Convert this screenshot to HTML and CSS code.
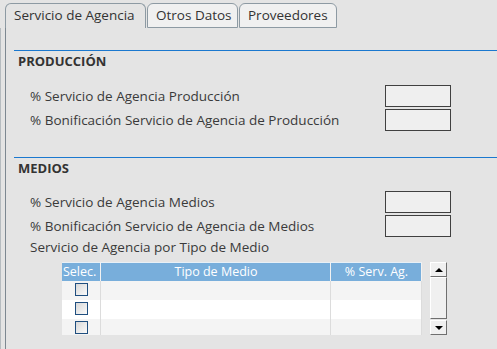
FILE: index.html
```html
<!DOCTYPE html>
<html lang="es">
<head>
    <meta charset="UTF-8">
    <title>Servicio de Agencia</title>
    <link rel="stylesheet" href="styles.css">
</head>
<body>
<div class="tabs">
    <div class="tab active">Servicio de Agencia</div>
    <div class="tab">Otros Datos</div>
    <div class="tab">Proveedores</div>
</div>
<div class="frame">
    <div class="panel">
        <!--produccion-->
        <div class="section">
            <h2>PRODUCCIÓN</h2>
            <div class="rows">
                <div class="row"><span>% Servicio de Agencia Producción</span><input class="field" type="text"></div>
                <div class="row"><span>% Bonificación Servicio de Agencia de Producción</span><input class="field" type="text"></div>
            </div>
        </div>
        <!--medios-->
        <div class="section medios">
            <h2>MEDIOS</h2>
            <div class="rows">
                <div class="row"><span>% Servicio de Agencia Medios</span><input class="field" type="text"></div>
                <div class="row"><span>% Bonificación Servicio de Agencia de Medios</span><input class="field" type="text"></div>
                <div class="row caption"><span>Servicio de Agencia por Tipo de Medio</span></div>
            </div>
            <div class="grid-box">
                <div class="grid">
                    <div class="head">Selec.</div>
                    <div class="head center">Tipo de Medio</div>
                    <div class="head center">% Serv. Ag.</div>

                    <div class="cell odd"><span class="check"></span></div>
                    <div class="cell odd"></div>
                    <div class="cell odd"></div>

                    <div class="cell"><span class="check"></span></div>
                    <div class="cell"></div>
                    <div class="cell"></div>

                    <div class="cell odd"><span class="check"></span></div>
                    <div class="cell odd"></div>
                    <div class="cell odd"></div>
                </div>
                <div class="scroll">
                    <div class="btn up"></div>
                    <div class="thumb"></div>
                    <div class="btn down"></div>
                </div>
            </div>
        </div>
    </div>
</div>
</body>
</html>
```

FILE: styles.css
```css
* {
    box-sizing: border-box;
}

body {
    margin: 0;
    background: #e4e4e4;
    font-family: "Open Sans", "Noto Sans", sans-serif;
    font-size: 13.5px;
    color: #3a3a3a;
    height: 349px;
    overflow: hidden;
}

/* pestañas */
.tabs {
    display: flex;
    margin-left: 5px;
    padding-top: 3px;
    height: 28px;
}

.tab {
    height: 25px;
    line-height: 23px;
    padding: 0 8px;
    border: 1px solid #8d9aa3;
    border-radius: 6px 6px 0 0;
    background: #f0f0f0;
    color: #333;
    margin-right: 1px;
    white-space: nowrap;
}

.tab.active {
    background: #e4e4e4;
    border-bottom: 0;
    width: 141px;
}

.tab:nth-child(2) {
    width: 91px;
}

.tab:nth-child(3) {
    width: 98px;
}

.frame {
    border-left: 1px solid #b6bcc0;
    padding-left: 4px;
    height: 321px;
}

.panel {
    border-left: 1px solid #7d8891;
    height: 100%;
    padding-top: 22px;
}

.section {
    margin-left: 8px;
    border-top: 1px solid #1b78cf;
}

.section.medios {
    margin-top: 26px;
}

.section h2 {
    margin: 0;
    padding-left: 4px;
    font-size: 13px;
    line-height: 20px;
    font-weight: bold;
    color: #333;
}

.rows {
    padding-left: 16px;
    margin-top: 14px;
    display: flex;
    flex-direction: column;
    gap: 2px;
}

.medios .rows {
    margin-top: 13px;
}

.row {
    display: grid;
    grid-template-columns: 355px 66px;
    align-items: center;
    height: 22px;
    white-space: nowrap;
}

.row span {
    margin-top: -1px;
}

.row.caption {
    height: 16px;
}

.field {
    width: 66px;
    height: 22px;
    margin: 0;
    border: 1px solid #404040;
    background: #efefef;
    font: inherit;
}

/* tabla */
.grid-box {
    display: flex;
    margin-top: 7px;
    margin-left: 48px;
    height: 73px;
}

.grid {
    width: 360px;
    height: 73px;
    overflow: hidden;
    display: grid;
    grid-template-columns: 39px 230px 91px;
    grid-auto-rows: 19px;
    align-content: start;
}

.head {
    background: #78aedb;
    color: #fff;
    font-size: 12.5px;
    line-height: 18px;
    border-top: 1px solid #e8f0f6;
    border-right: 1px solid #f2f2f2;
    padding-left: 1px;
    white-space: nowrap;
}

.head.center {
    text-align: center;
}

.cell {
    background: #fff;
    border-right: 1px solid #dcdcdc;
    display: flex;
    align-items: flex-start;
    justify-content: center;
    padding-top: 2px;
}

.cell.odd {
    background: #f4f4f4;
}

.check {
    width: 13px;
    height: 13px;
    border: 1px solid #1f4e7f;
    background: linear-gradient(135deg, #d8d8d8, #fafafa);
}

.scroll {
    margin-left: 8px;
    width: 17px;
    display: flex;
    flex-direction: column;
}

.btn, .thumb {
    background: #f0f0f0;
    border-top: 1px solid #fff;
    border-left: 1px solid #fff;
    border-right: 1px solid #6f6f6f;
    border-bottom: 1px solid #6f6f6f;
    position: relative;
}

.btn {
    height: 15px;
}

.thumb {
    height: 42px;
    margin-bottom: 1px;
}

.btn::after {
    content: '';
    position: absolute;
    left: 4px;
    top: 5px;
    border-left: 4px solid transparent;
    border-right: 4px solid transparent;
}

.btn.up::after {
    border-bottom: 4px solid #000;
}

.btn.down::after {
    border-top: 4px solid #000;
}
```
